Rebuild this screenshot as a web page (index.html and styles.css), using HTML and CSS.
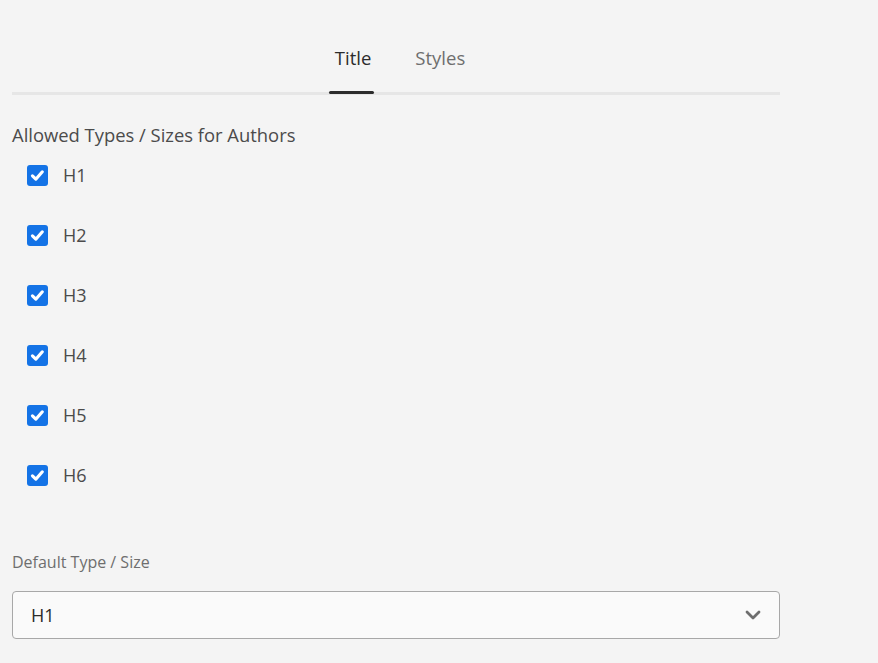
FILE: index.html
```html
<!DOCTYPE html>
<html>
<head>
<meta charset="utf-8">
<link rel="stylesheet" href="styles.css">
</head>
<body>
<div class="panel">
  <div class="tabs">
    <div class="tab active">Title</div>
    <div class="tab">Styles</div>
  </div>
  <div class="section-label">Allowed Types / Sizes for Authors</div>
  <ul class="checks">
    <li class="check"><span class="box"><svg viewBox="0 0 20 20"><path d="M5.2 10.4l3.2 3.1 6.2-7" /></svg></span><span class="check-text">H1</span></li>
    <li class="check"><span class="box"><svg viewBox="0 0 20 20"><path d="M5.2 10.4l3.2 3.1 6.2-7" /></svg></span><span class="check-text">H2</span></li>
    <li class="check"><span class="box"><svg viewBox="0 0 20 20"><path d="M5.2 10.4l3.2 3.1 6.2-7" /></svg></span><span class="check-text">H3</span></li>
    <li class="check"><span class="box"><svg viewBox="0 0 20 20"><path d="M5.2 10.4l3.2 3.1 6.2-7" /></svg></span><span class="check-text">H4</span></li>
    <li class="check"><span class="box"><svg viewBox="0 0 20 20"><path d="M5.2 10.4l3.2 3.1 6.2-7" /></svg></span><span class="check-text">H5</span></li>
    <li class="check"><span class="box"><svg viewBox="0 0 20 20"><path d="M5.2 10.4l3.2 3.1 6.2-7" /></svg></span><span class="check-text">H6</span></li>
  </ul>
  <div class="field-label">Default Type / Size</div>
  <div class="select">
    <span class="select-value">H1</span>
    <svg class="chevron" viewBox="0 0 16 10"><path d="M2 2l6 6 6-6" /></svg>
  </div>
</div>
</body>
</html>
```
FILE: styles.css
```css
html, body {
  margin: 0;
  padding: 0;
  background: #f4f4f4;
}
body {
  font-family: "Open Sans", "Liberation Sans", sans-serif;
  color: #4b4b4b;
}
.panel {
  width: 768px;
  padding: 0 0 0 12px;
}
.tabs {
  display: flex;
  justify-content: center;
  gap: 38px;
  border-bottom: 3px solid #e6e6e6;
  height: 92px;
  padding-left: 8px;
}
.tab {
  font-size: 18.5px;
  color: #6e6e6e;
  padding: 46px 3px 0;
  height: 46px;
  box-sizing: content-box;
  position: relative;
  line-height: 24px;
}
.tab.active {
  color: #2c2c2c;
}
.tab.active::after {
  content: "";
  position: absolute;
  left: -3px;
  right: 0;
  bottom: -2px;
  height: 3px;
  border-radius: 2px;
  background: #2c2c2c;
}
.section-label {
  margin-top: 28px;
  font-size: 18.4px;
  line-height: 24px;
  color: #4b4b4b;
}
.checks {
  list-style: none;
  margin: 18px 0 0;
  padding: 0 0 0 15px;
  display: flex;
  flex-direction: column;
  gap: 40px;
}
.check {
  display: flex;
  align-items: center;
  height: 20px;
}
.box {
  width: 21px;
  height: 21px;
  border-radius: 3px;
  background: #1473e6;
  display: flex;
  align-items: center;
  justify-content: center;
}
.box svg {
  width: 21px;
  height: 21px;
  fill: none;
  stroke: #fff;
  stroke-width: 3;
  stroke-linecap: round;
  stroke-linejoin: round;
}
.check-text {
  margin-left: 15px;
  font-size: 18px;
  color: #4b4b4b;
}
.field-label {
  margin-top: 67px;
  font-size: 16px;
  line-height: 20px;
  color: #6e6e6e;
}
.select {
  margin-top: 19px;
  height: 46px;
  border: 1px solid #a8a8a8;
  border-radius: 4px;
  background: #fafafa;
  display: flex;
  align-items: center;
  justify-content: space-between;
  padding: 0 18px 0 18px;
}
.select-value {
  font-size: 18px;
  color: #2c2c2c;
}
.chevron {
  width: 16px;
  height: 10px;
  fill: none;
  stroke: #6e6e6e;
  stroke-width: 2.8;
  stroke-linecap: round;
  stroke-linejoin: round;
}
```
